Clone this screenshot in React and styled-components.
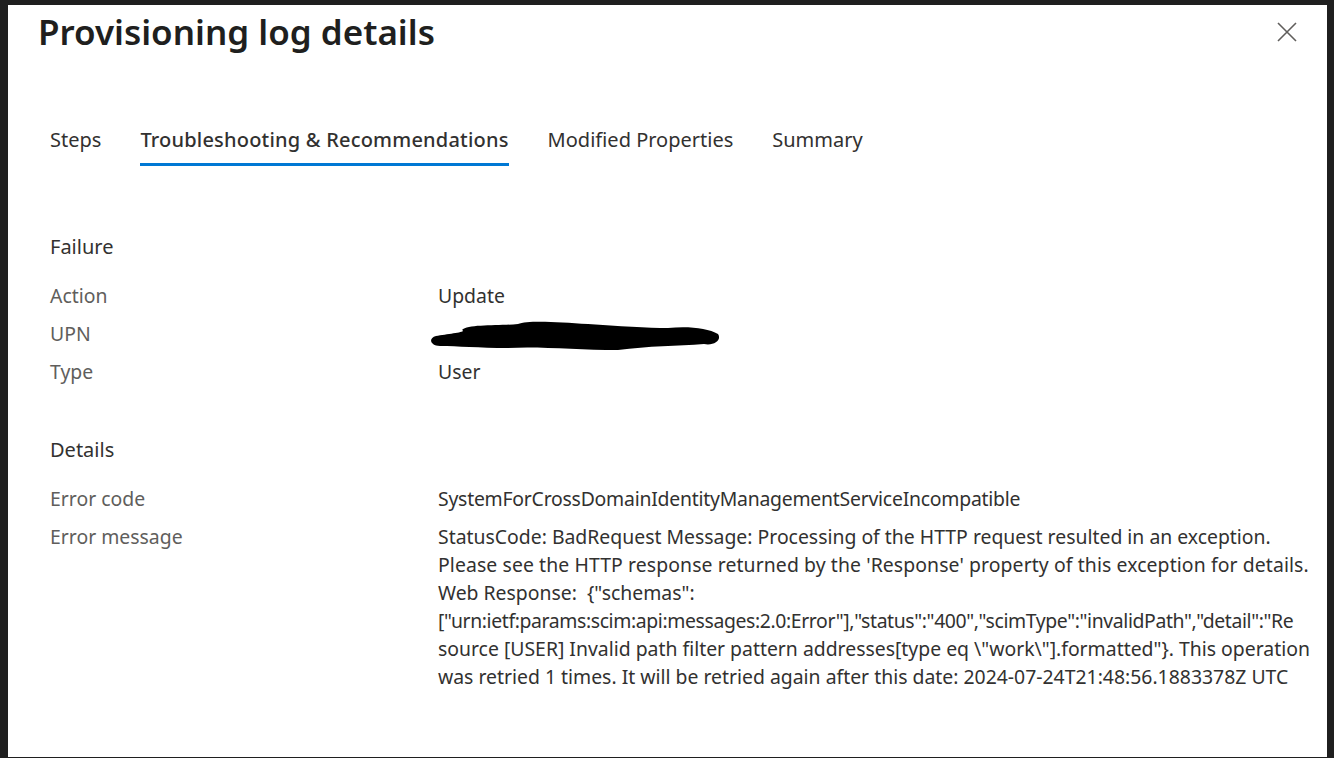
import React from "react";
import styled, { createGlobalStyle } from "styled-components";

const Global = createGlobalStyle`
  html, body { margin: 0; padding: 0; background: #1f1f1f; }
  body { font-family: "Noto Sans", "Open Sans", sans-serif; }
`;

const Frame = styled.div`
  width: 1334px;
  height: 758px;
  box-sizing: border-box;
  padding: 5px 7px 1px 8px;
  background: #1f1f1f;
`;

const Panel = styled.div`
  background: #ffffff;
  height: 100%;
  box-sizing: border-box;
  padding: 4px 0 0 30px;
  display: flex;
  flex-direction: column;
  overflow: hidden;
`;

const Header = styled.div`
  display: flex;
  justify-content: space-between;
  align-items: flex-start;
  padding-right: 28px;
`;

const Title = styled.h1`
  margin: 0;
  font-size: 35px;
  font-weight: 600;
  color: #201f1e;
  line-height: 46px;
`;

const Close = styled.button`
  border: 0;
  background: transparent;
  padding: 0;
  margin-top: 11px;
  width: 24px;
  height: 24px;
  display: flex;
  align-items: center;
  justify-content: center;
`;

const Tabs = styled.div`
  display: flex;
  gap: 39px;
  margin: 71px 0 0 12px;
`;

const Tab = styled.div`
  font-size: 20px;
  font-weight: ${(p) => (p.$active ? 500 : 400)};
  letter-spacing: ${(p) => (p.$active ? "0.2px" : "0")};
  color: #323130;
  height: 40px;
  line-height: 28px;
  box-sizing: border-box;
  border-bottom: 3px solid ${(p) => (p.$active ? "#0078d4" : "transparent")};
`;

const Body = styled.div`
  padding-left: 12px;
  margin-top: 62px;
  display: flex;
  flex-direction: column;
`;

const Section = styled.h2`
  margin: 0 0 16px 0;
  font-size: 20px;
  font-weight: 400;
  color: #323130;
  line-height: 38px;
`;

const Rows = styled.div`
  display: grid;
  grid-template-columns: 388px 1fr;
  row-gap: 10px;
  margin-bottom: 45px;
`;

const Label = styled.div`
  font-size: 19.4px;
  color: #605e5c;
  line-height: 28px;
`;

const Value = styled.div`
  font-size: 19.4px;
  color: #323130;
  line-height: 28px;
  letter-spacing: ${(p) => p.$spacing || "0"};
`;

const Line = styled.span`
  display: block;
  white-space: pre;
  letter-spacing: ${(p) => p.$spacing || "0"};
`;

const Redact = styled.svg`
  display: block;
  margin-left: -10px;
  margin-top: -4px;
  margin-bottom: -8px;
`;

const messageLines = [
  ["StatusCode: BadRequest Message: Processing of the HTTP request resulted in an exception.", "0"],
  ["Please see the HTTP response returned by the 'Response' property of this exception for details.", "0.1px"],
  ['Web Response:  {"schemas":', "0"],
  ['["urn:ietf:params:scim:api:messages:2.0:Error"],"status":"400","scimType":"invalidPath","detail":"Re', "-0.38px"],
  ['source [USER] Invalid path filter pattern addresses[type eq \\"work\\"].formatted"}. This operation', "0"],
  ["was retried 1 times. It will be retried again after this date: 2024-07-24T21:48:56.1883378Z UTC", "0"],
];

export default function App() {
  return (
    <>
      <Global />
      <Frame>
        <Panel>
          <Header>
            <Title>Provisioning log details</Title>
            <Close aria-label="Close">
              <svg width="20" height="20" viewBox="0 0 20 20">
                <path d="M1 1 L19 19 M19 1 L1 19" stroke="#605e5c" strokeWidth="1.6" fill="none" />
              </svg>
            </Close>
          </Header>
          <Tabs>
            <Tab>Steps</Tab>
            <Tab $active>Troubleshooting &amp; Recommendations</Tab>
            <Tab>Modified Properties</Tab>
            <Tab>Summary</Tab>
          </Tabs>
          <Body>
            <Section>Failure</Section>
            <Rows>
              <Label>Action</Label>
              <Value>Update</Value>
              <Label>UPN</Label>
              <Value>
                <Redact width="296" height="40" viewBox="0 0 296 40">
                  <path
                    d="M8 20 C 20 18, 40 16, 34 14 C 40 8, 70 10, 90 8 C 100 4, 130 6, 160 8 C 190 10, 220 12, 240 12 C 260 10, 280 12, 290 18 C 294 24, 286 30, 276 28 C 250 30, 220 30, 190 34 C 150 34, 110 30, 80 32 C 50 32, 30 30, 12 30 C 2 30, 0 22, 8 20 Z"
                    fill="#000"
                  />
                </Redact>
              </Value>
              <Label>Type</Label>
              <Value>User</Value>
            </Rows>
            <Section>Details</Section>
            <Rows>
              <Label>Error code</Label>
              <Value $spacing="-0.23px">SystemForCrossDomainIdentityManagementServiceIncompatible</Value>
              <Label>Error message</Label>
              <Value>
                {messageLines.map(([text, sp], i) => (
                  <Line key={i} $spacing={sp}>
                    {text}
                  </Line>
                ))}
              </Value>
            </Rows>
          </Body>
        </Panel>
      </Frame>
    </>
  );
}
